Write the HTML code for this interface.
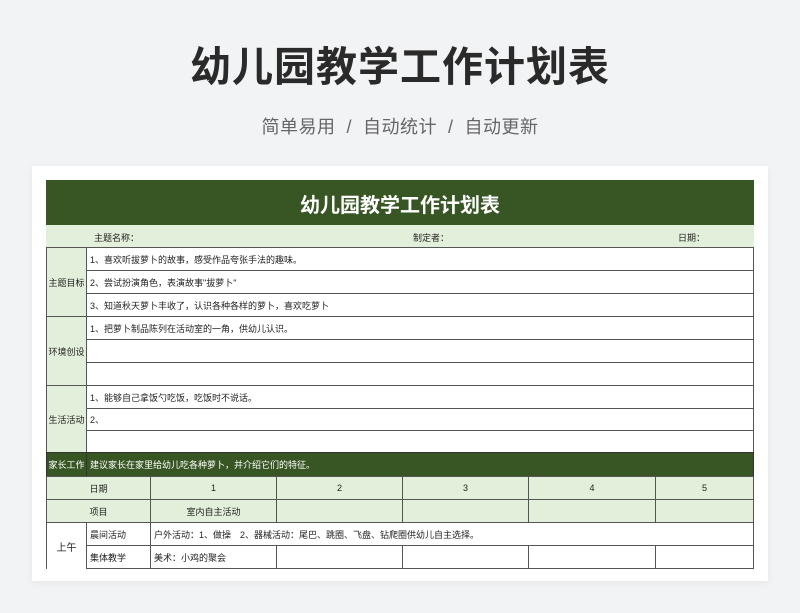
<!DOCTYPE html>
<html><head><meta charset="utf-8"><style>
*{margin:0;padding:0;box-sizing:border-box}
body{width:800px;height:613px;background:#f2f3f5;font-family:"Liberation Sans","Noto Sans CJK SC",sans-serif;position:relative;overflow:hidden}
.a{position:absolute}
.h1{left:0;width:800px;top:33px;text-align:center;font-size:41px;font-weight:bold;color:#2a2a2a;letter-spacing:1px}
.sub{left:0;width:800px;top:113px;text-align:center;font-size:18px;color:#666;letter-spacing:0.5px}
.card{left:32px;top:166px;width:736px;height:415px;background:#fff;box-shadow:0 2px 8px rgba(0,0,0,.06)}
.c{position:absolute;border:1px solid #555;font-size:9px;color:#222;display:flex;align-items:center;white-space:nowrap;overflow:hidden;margin:0 0 -1px 0}
.g{background:#e2efda}
.d{background:#375623;color:#fff}
.ctr{justify-content:center}
.p{padding-left:3px}
</style></head><body>
<div class="a h1">幼儿园教学工作计划表</div>
<div class="a sub">简单易用 &nbsp;/&nbsp; 自动统计 &nbsp;/&nbsp; 自动更新</div>
<div class="a card"></div>

<div class="c d ctr" style="left:46px;top:180px;width:708px;height:46px;font-size:20px;font-weight:bold;border-color:#375623">幼儿园教学工作计划表</div>
<div class="a g" style="left:46px;top:225px;width:708px;height:23px;font-size:9px;color:#222">
<span class="a" style="left:48px;top:6px">主题名称：</span>
<span class="a" style="left:367px;top:6px">制定者：</span>
<span class="a" style="left:632px;top:6px">日期：</span>
</div>

<div class="c g ctr" style="left:46px;top:247px;width:41px;height:70px">主题目标</div>
<div class="c p" style="left:86px;top:247px;width:668px;height:24px">1、喜欢听拔萝卜的故事，感受作品夸张手法的趣味。</div>
<div class="c p" style="left:86px;top:270px;width:668px;height:24px">2、尝试扮演角色，表演故事"拔萝卜"</div>
<div class="c p" style="left:86px;top:293px;width:668px;height:24px">3、知道秋天萝卜丰收了，认识各种各样的萝卜，喜欢吃萝卜</div>

<div class="c g ctr" style="left:46px;top:316px;width:41px;height:70px">环境创设</div>
<div class="c p" style="left:86px;top:316px;width:668px;height:24px">1、把萝卜制品陈列在活动室的一角，供幼儿认识。</div>
<div class="c p" style="left:86px;top:339px;width:668px;height:24px"></div>
<div class="c p" style="left:86px;top:362px;width:668px;height:24px"></div>

<div class="c g ctr" style="left:46px;top:385px;width:41px;height:68px">生活活动</div>
<div class="c p" style="left:86px;top:385px;width:668px;height:24px">1、能够自己拿饭勺吃饭，吃饭时不说话。</div>
<div class="c p" style="left:86px;top:408px;width:668px;height:23px">2、</div>
<div class="c p" style="left:86px;top:430px;width:668px;height:23px"></div>

<div class="c d ctr" style="left:46px;top:452px;width:41px;height:25px;border-color:#333">家长工作</div>
<div class="c d p" style="left:86px;top:452px;width:668px;height:25px;border-color:#333">建议家长在家里给幼儿吃各种萝卜，并介绍它们的特征。</div>

<div class="c g ctr" style="left:46px;top:476px;width:105px;height:24px">日期</div>
<div class="c g ctr" style="left:150px;top:476px;width:127px;height:24px">1</div>
<div class="c g ctr" style="left:276px;top:476px;width:127px;height:24px">2</div>
<div class="c g ctr" style="left:402px;top:476px;width:127px;height:24px">3</div>
<div class="c g ctr" style="left:528px;top:476px;width:128px;height:24px">4</div>
<div class="c g ctr" style="left:655px;top:476px;width:99px;height:24px">5</div>

<div class="c g ctr" style="left:46px;top:499px;width:105px;height:24px">项目</div>
<div class="c g ctr" style="left:150px;top:499px;width:127px;height:24px">室内自主活动</div>
<div class="c g ctr" style="left:276px;top:499px;width:127px;height:24px"></div>
<div class="c g ctr" style="left:402px;top:499px;width:127px;height:24px"></div>
<div class="c g ctr" style="left:528px;top:499px;width:128px;height:24px"></div>
<div class="c g ctr" style="left:655px;top:499px;width:99px;height:24px"></div>

<div class="c ctr" style="left:46px;top:522px;width:41px;height:47px;border-bottom:none;font-size:10px">上午</div>
<div class="c p" style="left:86px;top:522px;width:65px;height:24px">晨间活动</div>
<div class="c p" style="left:150px;top:522px;width:604px;height:24px">户外活动：1、做操　2、器械活动：尾巴、跳圈、飞盘、钻爬圈供幼儿自主选择。</div>
<div class="c p" style="left:86px;top:545px;width:65px;height:24px">集体教学</div>
<div class="c p" style="left:150px;top:545px;width:127px;height:24px">美术：小鸡的聚会</div>
<div class="c" style="left:276px;top:545px;width:127px;height:24px"></div>
<div class="c" style="left:402px;top:545px;width:127px;height:24px"></div>
<div class="c" style="left:528px;top:545px;width:128px;height:24px"></div>
<div class="c" style="left:655px;top:545px;width:99px;height:24px"></div>
</body></html>
